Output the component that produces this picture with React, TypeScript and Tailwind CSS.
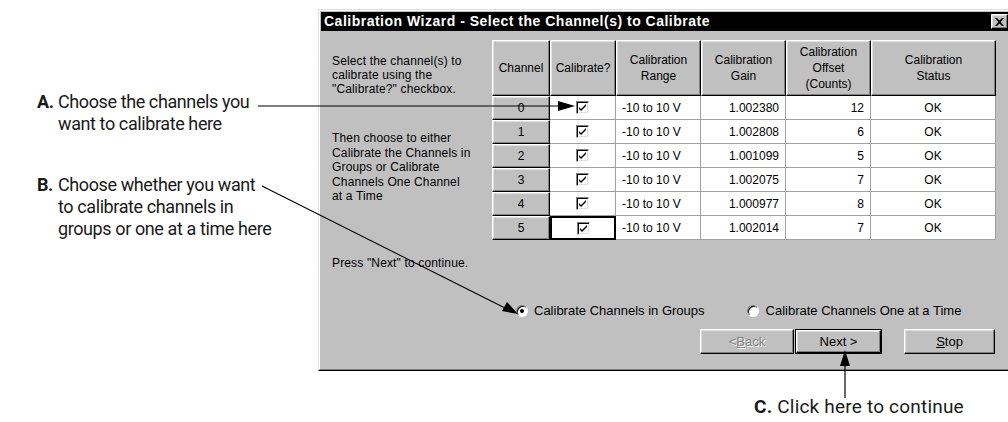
import React from 'react';

const rows = [
  { ch: '0', gain: '1.002380', offset: '12' },
  { ch: '1', gain: '1.002808', offset: '6' },
  { ch: '2', gain: '1.001099', offset: '5' },
  { ch: '3', gain: '1.002075', offset: '7' },
  { ch: '4', gain: '1.000977', offset: '8' },
  { ch: '5', gain: '1.002014', offset: '7' },
];

const raised =
  'bg-[#c0c0c0] border border-t-white border-l-white border-r-black border-b-black shadow-[inset_-1px_-1px_0_#808080,inset_1px_1px_0_#dfdfdf]';

const cell = 'bg-white border-r border-b border-[#a0a0a0] flex items-center';

const narrow = { fontFamily: 'Roboto, "Liberation Sans", sans-serif' };

function CheckBox() {
  return (
    <div className="w-[13px] h-[13px] bg-white border border-t-[#808080] border-l-[#808080] border-r-white border-b-white shadow-[inset_1px_1px_0_#000,inset_-1px_-1px_0_#dfdfdf] flex items-center justify-center">
      <svg width="9" height="9" viewBox="0 0 9 9">
        <path d="M1 4 L3 6 L8 1 L8 3 L3 8 L1 6 Z" fill="#000" />
      </svg>
    </div>
  );
}

function Radio({ checked }: { checked?: boolean }) {
  return (
    <div className="w-[12px] h-[12px] rounded-full bg-white border border-t-[#808080] border-l-[#808080] border-r-white border-b-white shadow-[inset_1px_1px_0_#000] flex items-center justify-center">
      {checked && <div className="w-[4px] h-[4px] rounded-full bg-black" />}
    </div>
  );
}

function HeaderCell({ w, lines }: { w: string; lines: string[] }) {
  return (
    <div className={`${raised} ${w} h-full flex flex-col items-center justify-center leading-[16px] overflow-hidden`}>
      {lines.map((l) => (
        <span key={l}>{l}</span>
      ))}
    </div>
  );
}

function WinButton({ children, isDefault, disabled, w }: { children: React.ReactNode; isDefault?: boolean; disabled?: boolean; w: string }) {
  return (
    <div className={`${w} h-[25px] ${isDefault ? 'border border-black' : ''}`}>
      <div className={`${raised} w-full h-full flex items-center justify-center text-[13px] ${disabled ? 'text-[#808080] [text-shadow:1px_1px_0_#fff]' : 'text-black'}`}>
        {children}
      </div>
    </div>
  );
}

export default function App() {
  return (
    <div
      className="relative w-[1008px] h-[422px] overflow-hidden bg-white flex"
      style={{ fontFamily: '"Liberation Sans", Arial, sans-serif' }}
    >
      {/* Callouts A and B */}
      <div className="w-[318px] shrink-0 pt-[91px] pl-[37px] text-[18px] leading-[22px] tracking-[-0.4px] text-[#1a1a1a]" style={narrow}>
        <div className="flex">
          <span className="w-[21px] font-bold">A.</span>
          <div>
            Choose the channels you
            <br />
            want to calibrate here
          </div>
        </div>
        <div className="flex mt-[39px]">
          <span className="w-[21px] font-bold">B.</span>
          <div>
            Choose whether you want
            <br />
            to calibrate channels in
            <br />
            groups or one at a time here
          </div>
        </div>
      </div>

      <div className="flex flex-col">
        {/* Dialog */}
        <div className="mt-[9px] w-[696px] h-[362px] border border-t-[#dfdfdf] border-l-[#dfdfdf] border-r-black border-b-black">
          <div className="w-full h-full bg-[#c0c0c0] border border-t-white border-l-white border-r-[#808080] border-b-[#808080] p-[1px] flex flex-col text-[12px] text-black">
            {/* Title bar */}
            <div className="h-[19px] bg-black flex items-center justify-between pl-[3px] pr-[3px]">
              <span className="text-white font-bold text-[14px] tracking-[0.5px]">
                Calibration Wizard - Select the Channel(s) to Calibrate
              </span>
              <div className={`${raised} w-[17px] h-[15px] flex items-center justify-center`}>
                <svg width="9" height="8" viewBox="0 0 9 8">
                  <path d="M0 0 L2 0 L4.5 2.6 L7 0 L9 0 L5.6 4 L9 8 L7 8 L4.5 5.4 L2 8 L0 8 L3.4 4 Z" fill="#000" />
                </svg>
              </div>
            </div>

            {/* Body */}
            <div className="flex mt-[9px] pl-[11px]">
              <div className="w-[160px] shrink-0 leading-[14px] pt-[14px] tracking-[0.15px]">
                <div>
                  Select the channel(s) to
                  <br />
                  calibrate using the
                  <br />
                  "Calibrate?" checkbox.
                </div>
                <div className="mt-[35px] leading-[14.5px]">
                  Then choose to either
                  <br />
                  Calibrate the Channels in
                  <br />
                  Groups or Calibrate
                  <br />
                  Channels One Channel
                  <br />
                  at a Time
                </div>
              </div>

              {/* Grid */}
              <div className="flex flex-col">
                <div className="flex h-[56px]">
                  <HeaderCell w="w-[58px]" lines={['Channel']} />
                  <HeaderCell w="w-[66px]" lines={['Calibrate?']} />
                  <HeaderCell w="w-[85px]" lines={['Calibration', 'Range']} />
                  <HeaderCell w="w-[85px]" lines={['Calibration', 'Gain']} />
                  <HeaderCell w="w-[85px]" lines={['Calibration', 'Offset', '(Counts)']} />
                  <HeaderCell w="w-[125px]" lines={['Calibration', 'Status']} />
                </div>
                {rows.map((r, i) => (
                  <div key={r.ch} className="flex h-[24px]">
                    <div className={`${raised} w-[58px] h-full flex items-center justify-center`}>{r.ch}</div>
                    <div
                      className={`w-[66px] h-full flex items-center justify-center bg-white ${
                        i === rows.length - 1 ? 'border-2 border-black' : 'border-r border-b border-[#a0a0a0]'
                      }`}
                    >
                      <CheckBox />
                    </div>
                    <div className={`${cell} w-[85px] h-full pl-[6px]`}>-10 to 10 V</div>
                    <div className={`${cell} w-[85px] h-full justify-end pr-[6px]`}>{r.gain}</div>
                    <div className={`${cell} w-[85px] h-full justify-end pr-[6px]`}>{r.offset}</div>
                    <div className={`${cell} w-[125px] h-full justify-center`}>OK</div>
                  </div>
                ))}
              </div>
            </div>

            <div className="pl-[11px] mt-[16px] leading-[14px] tracking-[0.15px]">Press "Next" to continue.</div>

            {/* Radios */}
            <div className="flex items-center mt-[34px] pl-[195px] leading-[14px] text-[13px]">
              <Radio checked />
              <span className="ml-[6px]">Calibrate Channels in Groups</span>
              <div className="ml-[42px]">
                <Radio />
              </div>
              <span className="ml-[7px]">Calibrate Channels One at a Time</span>
            </div>

            {/* Buttons */}
            <div className="flex mt-[11px] pl-[379px]">
              <WinButton w="w-[94px]" disabled>
                &lt;<span className="underline">B</span>ack
              </WinButton>
              <div className="ml-[1px]">
                <WinButton w="w-[87px]" isDefault>
                  Next &gt;
                </WinButton>
              </div>
              <div className="ml-[22px]">
                <WinButton w="w-[91px]">
                  <span className="underline">S</span>top
                </WinButton>
              </div>
            </div>
          </div>
        </div>

        {/* Callout C */}
        <div className="mt-[25px] ml-[436px] text-[19px] leading-[22px] tracking-[0.2px] text-[#1a1a1a] whitespace-nowrap" style={narrow}>
          <span className="font-bold">C.</span> Click here to continue
        </div>
      </div>

      {/* Leader lines */}
      <svg className="absolute inset-0 pointer-events-none" width="1008" height="422">
        <line x1="258" y1="106" x2="562" y2="106" stroke="#000" strokeWidth="1.2" />
        <polygon points="575,106 558,101 558,111" fill="#000" />
        <line x1="262" y1="186" x2="507" y2="309" stroke="#000" strokeWidth="1.1" />
        <polygon points="518,314 502,311 507,302" fill="#000" />
        <line x1="845" y1="398" x2="845" y2="362" stroke="#000" strokeWidth="1.2" />
        <polygon points="845,350 840,366 850,366" fill="#000" />
      </svg>
    </div>
  );
}
